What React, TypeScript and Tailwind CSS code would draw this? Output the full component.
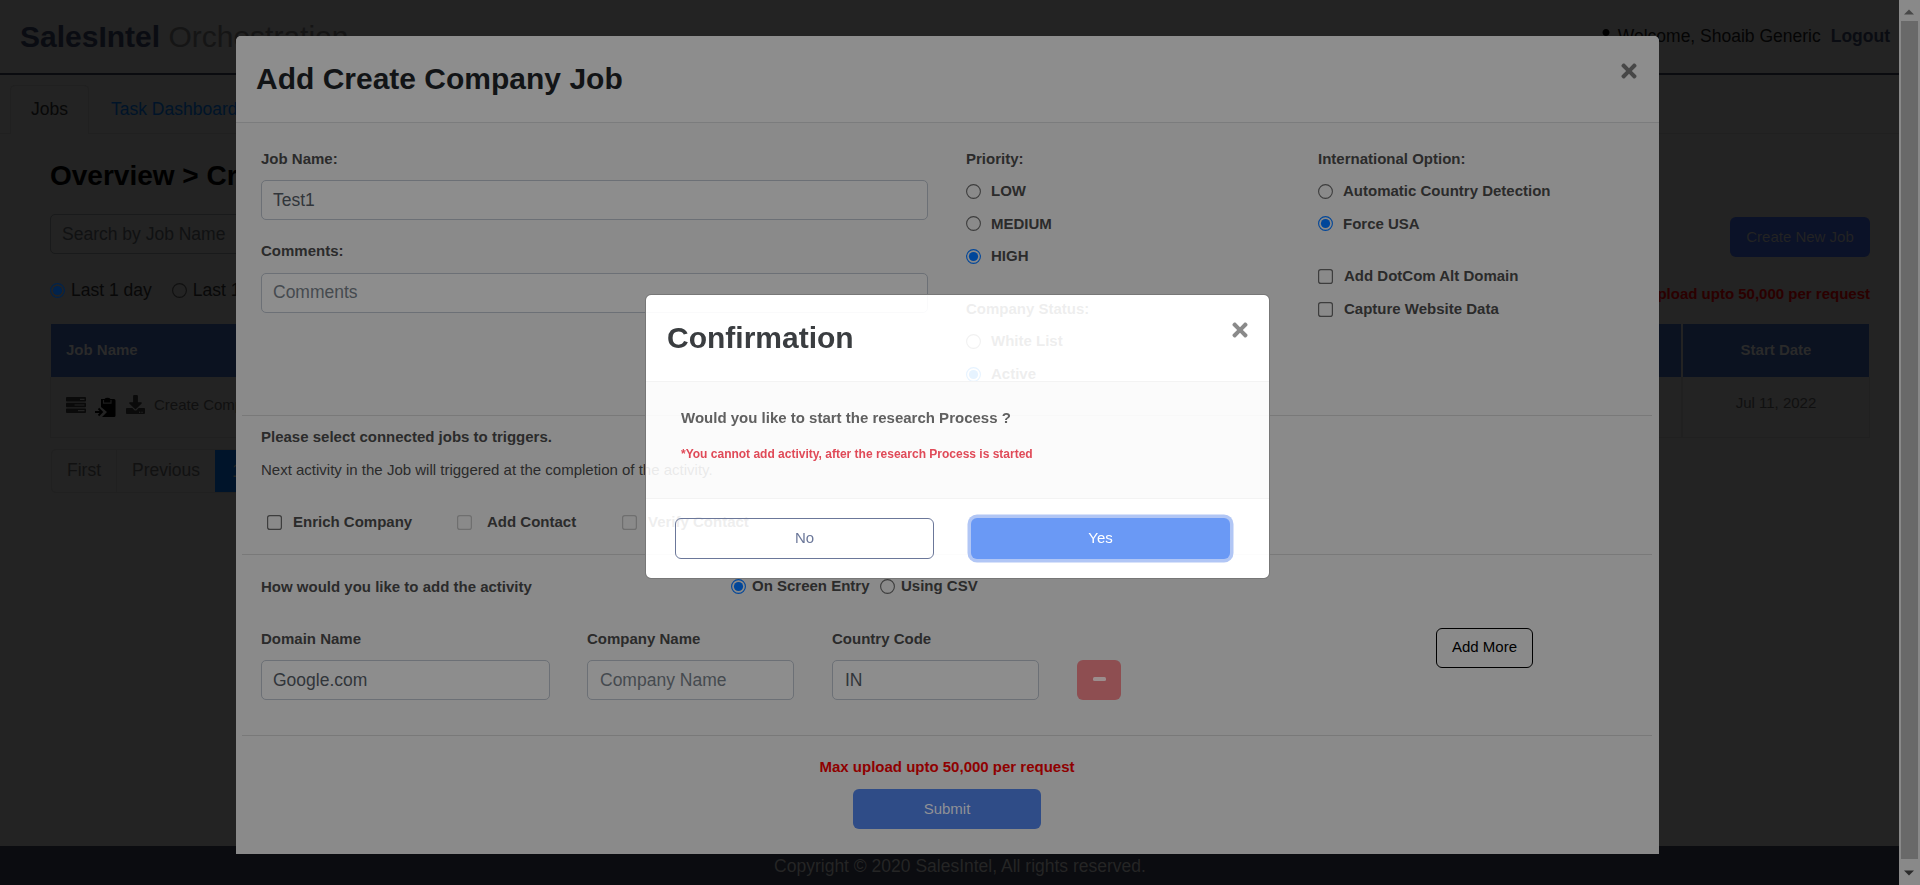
import type { ReactNode } from "react";
import { FaTimes, FaDownload, FaUser } from "react-icons/fa";

function Radio({ checked = false, dark = false }: { checked?: boolean; dark?: boolean }) {
  const on = dark ? "#01234c" : "#00469a";
  const off = dark ? "#101010" : "#3d3d3d";
  return (
    <svg width="15" height="15" viewBox="0 0 15 15" className="shrink-0">
      <circle cx="7.5" cy="7.5" r="6.9" fill="none" stroke={checked ? on : off} strokeWidth="1.1" />
      {checked && <circle cx="7.5" cy="7.5" r="4.6" fill={on} />}
    </svg>
  );
}

function Check({ disabled = false }: { disabled?: boolean }) {
  return (
    <svg width="15" height="15" viewBox="0 0 15 15" className="shrink-0">
      <rect x="0.6" y="0.6" width="13.8" height="13.8" rx="2.2" fill="none" stroke={disabled ? "#6f6f6f" : "#3d3d3d"} strokeWidth="1.2" />
    </svg>
  );
}

function Option({ children, control, gap = "gap-[10px]" }: { children: ReactNode; control: ReactNode; gap?: string }) {
  return (
    <div className={`flex h-[32.6px] items-center ${gap}`}>
      {control}
      <span>{children}</span>
    </div>
  );
}

function Field({ children, className = "" }: { children: ReactNode; className?: string }) {
  return (
    <div className={`flex h-10 items-center rounded-[5px] border border-[#6c7076] bg-[#8d8d8d] px-[11px] text-[17.5px] font-normal ${className}`}>
      {children}
    </div>
  );
}

function BackgroundPage() {
  return (
    <div className="flex h-full min-w-0 flex-1 flex-col bg-[#232323] text-[17.5px] text-[#080808]">
      <header className="flex h-[75px] shrink-0 items-center justify-between border-b-2 border-[#0a0b0f] pr-[9px] pl-5">
        <div className="text-[30px] leading-none text-[#151515]">
          <b className="text-[#0a0c12]">SalesIntel</b> Orchestration
        </div>
        <div className="flex items-center">
          <FaUser className="mr-[5px] mb-[2px] size-[14px] text-black" />
          <span className="mr-[10px] text-[#050505]">Welcome, Shoaib Generic</span>
          <b className="text-[#0a0c12]">Logout</b>
        </div>
      </header>
      <nav className="flex h-[59px] shrink-0 items-end border-b border-[#202020] pl-[10px]">
        <div className="-mb-px flex h-[49px] w-[79px] items-center justify-center rounded-t-[5px] border border-b-0 border-[#202020] bg-[#232323] pb-[2px]">Jobs</div>
        <div className="flex h-[49px] items-center px-[22px] pt-px text-[#001429]">Task Dashboard</div>
      </nav>
      <main className="flex flex-1 flex-col pr-[29px] pl-[50px]">
        <h2 className="mt-[26px] h-[32px] text-[28px] leading-[32px] font-bold text-black">Overview &gt; Create Company</h2>
        <div className="mt-[22px] flex justify-between">
          <div className="flex h-10 w-[400px] items-center rounded-[5px] border border-[#191a1b] px-[11px] text-[#101112]">Search by Job Name</div>
          <div className="mt-[3px] flex h-10 w-[140px] items-center justify-center rounded-[6px] bg-[#0b1228] text-[15px] text-[#232323]">Create New Job</div>
        </div>
        <div className="flex h-[67px] items-center justify-between">
          <div className="flex items-center pb-px">
            <Radio checked dark />
            <span className="mr-5 ml-[6px]">Last 1 day</span>
            <Radio dark />
            <span className="ml-[6px]">Last 1 week</span>
          </div>
          <b className="mt-2 text-[15px] text-[#2b0000]">Max upload upto 50,000 per request</b>
        </div>
        <div className="mr-px flex h-[53px] gap-[2px] pl-px text-[15px] font-bold text-[#2a2a2a]">
          <div className="flex flex-1 items-center bg-[#0b1220] pl-[15px]">Job Name</div>
          <div className="flex w-[186px] items-center justify-center bg-[#0b1220]">Start Date</div>
        </div>
        <div className="flex h-[61px] border-x border-b border-[#202020] text-[15px] text-[#101010]">
          <div className="flex flex-1 items-center pb-1 pl-[15px]">
            <svg width="20" height="16" viewBox="0 0 20 16" fill="#0a0a0a">
              <path d="M1 0h18a1 1 0 0 1 1 1v2.6a1 1 0 0 1-1 1H1a1 1 0 0 1-1-1V1a1 1 0 0 1 1-1zM1 5.7h18a1 1 0 0 1 1 1v2.6a1 1 0 0 1-1 1H1a1 1 0 0 1-1-1V6.700a1 1 0 0 1 1-1zM1 11.400h18a1 1 0 0 1 1 1V15a1 1 0 0 1-1 1H1a1 1 0 0 1-1-1v-2.600a1 1 0 0 1 1-1z" />
              <path d="M14 1.700h4.500v1.200H14zM8.500 7.400h10v1.200h-10zM12 13.100h6.500v1.200H12z" fill="#232323" />
            </svg>
            <svg width="21" height="20" viewBox="0 0 21 20" className="mt-[3px] ml-[9px]">
              <path d="M6 2h3.500a3.500 2.800 0 0 1 6 0H19a1.500 1.500 0 0 1 1.500 1.500v15A1.500 1.500 0 0 1 19 20H7l5-5-6-5z" fill="#000" />
              <path d="M8.500 3v3.200h7.500V3" fill="none" stroke="#1c1c1c" strokeWidth="1.200" />
              <path d="M0 15h6M3.500 11.500L7 15l-3.500 3.500" fill="none" stroke="#000" strokeWidth="1.800" />
            </svg>
            <FaDownload className="mb-px ml-[10px] size-[19px] text-[#0a0a0a]" />
            <span className="ml-[9px] pt-px">Create Company</span>
          </div>
          <div className="flex w-[188px] justify-center border-l-2 border-[#202020] pt-[15px]">Jul 11, 2022</div>
        </div>
        <div className="mt-[11px] ml-px flex h-11 w-fit rounded-[5px] border border-[#202020] text-[#111]">
          <div className="flex w-[65px] items-center justify-center border-r border-[#202020] pb-[2px]">First</div>
          <div className="flex w-[98px] items-center justify-center pb-[2px]">Previous</div>
          <div className="flex w-[45px] items-center bg-[#00142a] pl-[17px] text-[#232323]">1</div>
        </div>
      </main>
      <footer className="flex h-[39px] shrink-0 items-center justify-center bg-[#0b0c10] pt-[2px] pl-[21px] text-[#252525]">
        Copyright © 2020 SalesIntel, All rights reserved.
      </footer>
    </div>
  );
}

function Scrollbar() {
  return (
    <div className="flex h-full w-[21px] flex-col items-center bg-[#898989] pr-px">
      <div className="flex h-[21px] items-center justify-center">
        <svg width="10" height="6" viewBox="0 0 10 6" className="mt-[2px]">
          <path d="M0 5.500L5 0.500L10 5.500z" fill="#484848" />
        </svg>
      </div>
      <div className="w-[17px] flex-1 bg-[#696969]" />
      <div className="flex h-[26px] items-center justify-center">
        <svg width="10" height="6" viewBox="0 0 10 6" className="mt-[2px]">
          <path d="M0 0.500L5 5.500L10 0.500z" fill="#2b2b2b" />
        </svg>
      </div>
    </div>
  );
}

function JobModal() {
  return (
    <section className="absolute top-[36px] left-[236px] flex h-[818px] w-[1423px] flex-col rounded-t-[5px] bg-[#8a8a8a] text-[15px] font-bold text-[#2b2b2b]">
      <header className="flex h-[87px] shrink-0 justify-between rounded-t-[5px] border-b border-[#7b7c7d] bg-[#8d8d8d] pr-[19px] pl-5">
        <h1 className="mt-[25px] text-[30px] leading-[36px] text-[#121416]">Add Create Company Job</h1>
        <FaTimes className="mt-[24px] size-[22px] text-[#474747]" />
      </header>
      <div className="mr-[7px] ml-[6px] flex h-[293px] shrink-0 border-b border-[#797979] pl-[19px]">
        <div className="w-[705px] pr-[38px]">
          <div className="mt-[25px] h-[32px] leading-[22px]">Job Name:</div>
          <Field className="text-[#31353a]">Test1</Field>
          <div className="mt-[20px] h-[33px] leading-[22px]">Comments:</div>
          <Field className="pb-[2px] text-[#454a4f]">Comments</Field>
        </div>
        <div className="w-[352px]">
          <div className="mt-[25px] h-[27px] leading-[22px]">Priority:</div>
          <Option control={<Radio />}>LOW</Option>
          <Option control={<Radio />}>MEDIUM</Option>
          <Option control={<Radio checked />}>HIGH</Option>
          <div className="mt-[25px] h-[27.500px] leading-[22px]">Company Status:</div>
          <Option control={<Radio />}>White List</Option>
          <Option control={<Radio checked />}>Active</Option>
        </div>
        <div>
          <div className="mt-[25px] h-[27px] leading-[22px]">International Option:</div>
          <Option control={<Radio />}>Automatic Country Detection</Option>
          <Option control={<Radio checked />}>Force USA</Option>
          <div className="h-[20px]" />
          <Option control={<Check />} gap="gap-[11px]">Add DotCom Alt Domain</Option>
          <Option control={<Check />} gap="gap-[11px]">Capture Website Data</Option>
        </div>
      </div>
      <div className="mr-[7px] ml-[6px] flex h-[139px] shrink-0 flex-col border-b border-[#797979] pl-[19px]">
        <div className="mt-[10px] leading-[22px]">Please select connected jobs to triggers.</div>
        <div className="mt-[11px] leading-[22px] font-normal">Next activity in the Job will triggered at the completion of the activity.</div>
        <div className="mt-[25px] flex pl-[6px]">
          <div className="w-[190px]">
            <Option control={<Check />} gap="gap-[11px]">Enrich Company</Option>
          </div>
          <div className="w-[165px]">
            <Option control={<Check disabled />} gap="gap-[15px]">Add Contact</Option>
          </div>
          <Option control={<Check disabled />} gap="gap-[11px]">Verify Contact</Option>
        </div>
      </div>
      <div className="mr-[7px] ml-[6px] h-[181px] shrink-0 border-b border-[#797979] pl-[19px]">
        <div className="mt-[15px] flex h-[33px]">
          <div className="w-[470px] leading-[33px]">How would you like to add the activity</div>
          <div className="w-[149px]">
            <Option control={<Radio checked />} gap="gap-[6px]">On Screen Entry</Option>
          </div>
          <Option control={<Radio />} gap="gap-[6px]">Using CSV</Option>
        </div>
        <div className="mt-[25px] flex">
          <div className="w-[326px]">
            <div className="h-[32px] leading-[22px]">Domain Name</div>
            <Field className="w-[289px] text-[#31353a]">Google.com</Field>
          </div>
          <div className="w-[245px]">
            <div className="h-[32px] leading-[22px]">Company Name</div>
            <Field className="w-[207px] pl-[12px] text-[#454a4f]">Company Name</Field>
          </div>
          <div className="w-[245px]">
            <div className="h-[32px] leading-[22px]">Country Code</div>
            <Field className="w-[207px] pl-[12px] text-[#31353a]">IN</Field>
          </div>
          <div className="mt-[32px] flex h-10 w-[44px] items-center justify-center rounded-[6px] bg-[#8e4e51]">
            <div className="mb-[2px] h-[4px] w-[13px] rounded-[1.500px] bg-[#9b8d8d]" />
          </div>
          <div className="ml-[315px] flex h-10 w-[97px] items-center justify-center rounded-[6px] border border-black pb-[2px] font-normal text-black">Add More</div>
        </div>
      </div>
      <div className="flex flex-col items-center pr-px">
        <div className="mt-[20px] leading-[22px] text-[#8f0000]">Max upload upto 50,000 per request</div>
        <div className="mt-[11px] flex h-10 w-[188px] items-center justify-center rounded-[6px] bg-[#2f4c87] font-normal text-[#8f9196]">Submit</div>
      </div>
    </section>
  );
}

function ConfirmModal() {
  return (
    <section className="absolute top-[295px] left-[646px] flex h-[283px] w-[623px] flex-col overflow-hidden rounded-[5px] bg-white/90 text-[15px] outline outline-[#777] backdrop-brightness-[1.83]">
      <header className="flex h-[87px] shrink-0 justify-between border-b border-[#f3f3f3] pr-[18px] pl-[21px]">
        <h2 className="mt-[25px] text-[30px] leading-[36px] font-bold text-[#3a3d40]">Confirmation</h2>
        <FaTimes className="mt-[24px] size-[22px] text-[#8a8a8a]" />
      </header>
      <div className="h-[117px] shrink-0 border-b border-[#f3f3f3] bg-black/[0.015] pl-[35px] font-bold">
        <div className="mt-[25px] leading-[22px] text-[#606060]">Would you like to start the research Process ?</div>
        <div className="mt-[15px] text-[12px] leading-[20px] text-[#e04a58]">*You cannot add activity, after the research Process is started</div>
      </div>
      <footer className="flex gap-[37px] pt-[19px] pl-[29px]">
        <div className="flex h-[41px] w-[259px] items-center justify-center rounded-[6px] border border-[#6b7799] text-[#6b7799]">No</div>
        <div className="flex h-[41px] w-[259px] items-center justify-center rounded-[6px] bg-[#6a99f5] text-white ring-[3.500px] ring-[#b1c6f5]">Yes</div>
      </footer>
    </section>
  );
}

export default function App() {
  return (
    <div className="relative flex h-[885px] w-[1920px] overflow-hidden font-['Liberation_Sans',Arial,sans-serif] whitespace-nowrap">
      <BackgroundPage />
      <Scrollbar />
      <JobModal />
      <ConfirmModal />
    </div>
  );
}
